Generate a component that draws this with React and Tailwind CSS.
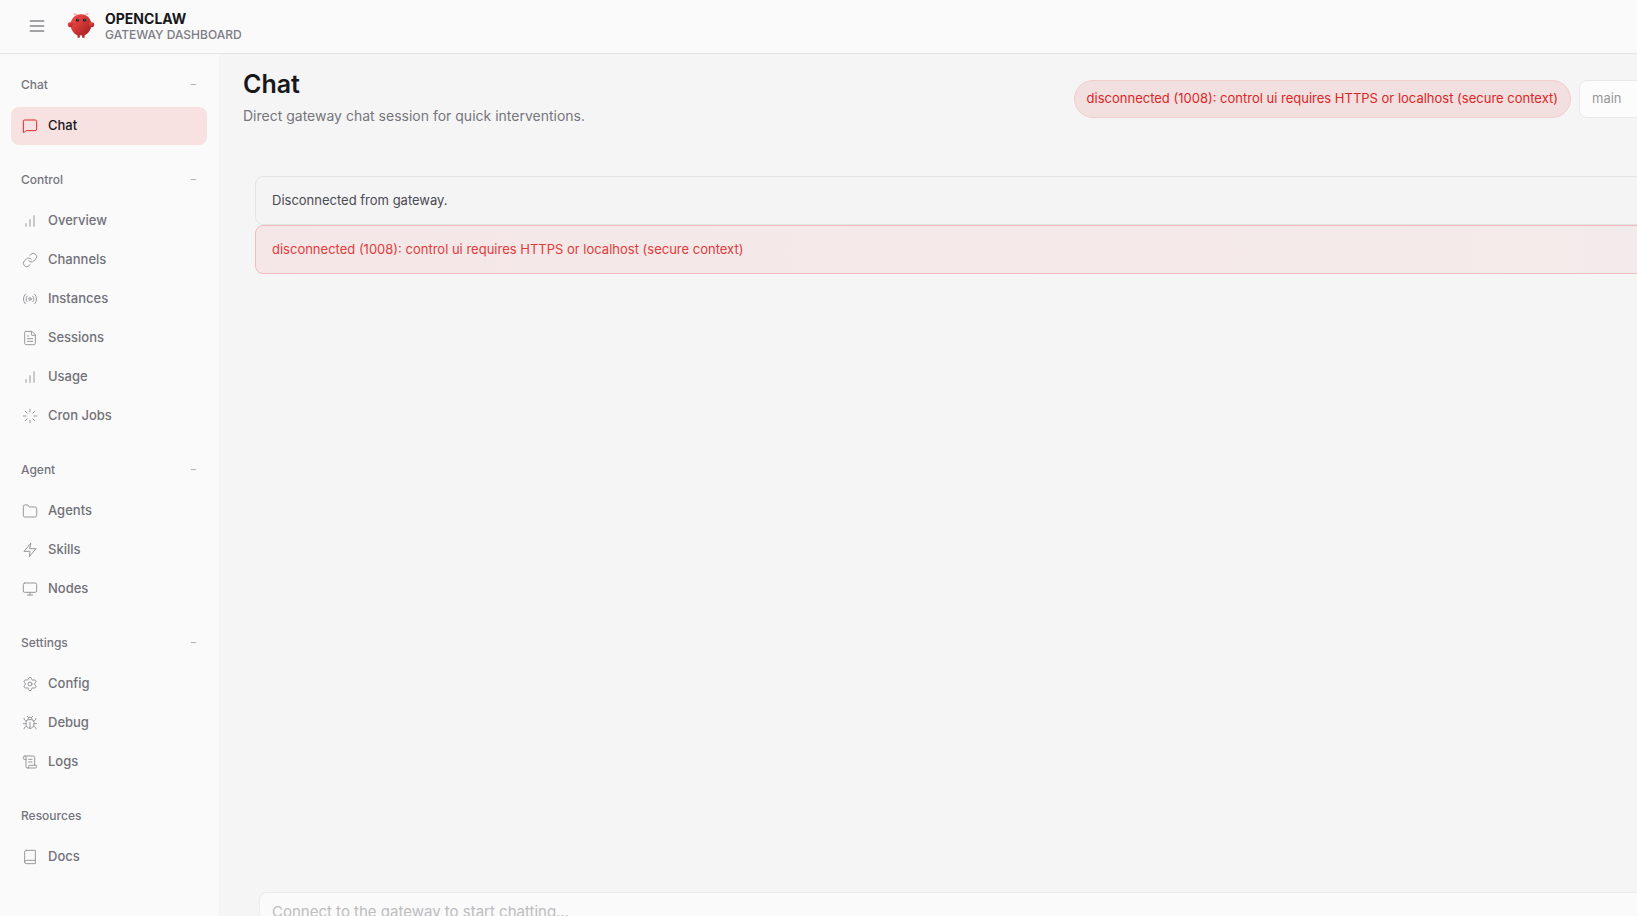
import React, { useState } from "react";
import { FileText, Link, Loader, MessageSquare, Monitor, Radio, ScrollText, Settings } from "lucide-react";

function makeIcon(paths) {
  return function Icon({ className }) {
    return (
      <svg viewBox="0 0 24 24" fill="none" stroke="currentColor" strokeWidth="1.5" strokeLinecap="round" strokeLinejoin="round" className={className} aria-hidden="true">
        {paths.map(d => <path key={d} d={d} />)}
      </svg>
    );
  };
}

const Bars = makeIcon(["M12 20V10", "M18 20V4", "M6 20v-4"]);
const Folder = makeIcon(["M22 19a2 2 0 0 1-2 2H4a2 2 0 0 1-2-2V5a2 2 0 0 1 2-2h5l2 3h9a2 2 0 0 1 2 2z"]);
const Zap = makeIcon(["M13 2 3 14h9l-1 8 10-12h-9z"]);
const Book = makeIcon(["M4 19.5A2.5 2.5 0 0 1 6.5 17H20", "M6.5 2H20v20H6.5A2.5 2.5 0 0 1 4 19.5v-15A2.5 2.5 0 0 1 6.5 2z"]);
const Bug = makeIcon([
  "m8 2 1.88 1.88", "M14.12 3.88 16 2", "M9 7.13v-1a3 3 0 1 1 6 0v1",
  "M12 20c-3.3 0-6-2.7-6-6v-3a4 4 0 0 1 4-4h4a4 4 0 0 1 4 4v3c0 3.3-2.7 6-6 6",
  "M12 20v-9", "M6.53 9C4.6 8.8 3 7.1 3 5", "M6 13H2", "M3 21c0-2.1 1.7-3.9 3.8-4",
  "M20.97 5c0 2.1-1.6 3.8-3.5 4", "M22 13h-4", "M17.2 17c2.1.1 3.8 1.9 3.8 4",
]);

const NAV = [
  { label: "Chat", items: [{ label: "Chat", icon: MessageSquare }] },
  {
    label: "Control",
    items: [
      { label: "Overview", icon: Bars },
      { label: "Channels", icon: Link },
      { label: "Instances", icon: Radio },
      { label: "Sessions", icon: FileText },
      { label: "Usage", icon: Bars },
      { label: "Cron Jobs", icon: Loader },
    ],
  },
  {
    label: "Agent",
    items: [
      { label: "Agents", icon: Folder },
      { label: "Skills", icon: Zap },
      { label: "Nodes", icon: Monitor },
    ],
  },
  {
    label: "Settings",
    items: [
      { label: "Config", icon: Settings },
      { label: "Debug", icon: Bug },
      { label: "Logs", icon: ScrollText },
    ],
  },
  { label: "Resources", fixed: true, items: [{ label: "Docs", icon: Book }] },
];

const ERROR = "disconnected (1008): control ui requires HTTPS or localhost (secure context)";

function Logo() {
  return (
    <svg viewBox="0 0 120 120" className="mb-0.5 h-7 w-7 shrink-0" aria-hidden="true">
      <defs>
        <linearGradient id="claw" x1="0%" y1="0%" x2="100%" y2="100%">
          <stop offset="0%" stopColor="#ff4d4d" />
          <stop offset="100%" stopColor="#991b1b" />
        </linearGradient>
      </defs>
      <path d="M60 10C30 10 15 35 15 55s15 40 30 45v10h10v-10s5 2 10 0v10h10v-10c15-5 30-25 30-45S90 10 60 10Z" fill="url(#claw)" />
      <path d="M20 45C5 40 0 50 5 60s15 5 20-5c3-7 0-10-5-10Z" fill="url(#claw)" />
      <path d="M100 45c15-5 20 5 15 15s-15 5-20-5c-3-7 0-10 5-10Z" fill="url(#claw)" />
      <path d="M45 15Q35 5 30 8M75 15Q85 5 90 8" stroke="#ff4d4d" strokeWidth="3" strokeLinecap="round" fill="none" />
      <circle cx="45" cy="35" r="6" fill="#050810" />
      <circle cx="75" cy="35" r="6" fill="#050810" />
      <circle cx="46" cy="34" r="2.5" fill="#00e5cc" />
      <circle cx="76" cy="34" r="2.5" fill="#00e5cc" />
    </svg>
  );
}

function Topbar({ onToggle }) {
  return (
    <header className="flex h-[54px] shrink-0 items-center border-b border-[#e4e4e7] bg-[#fafafa] pl-[19px]">
      <button type="button" onClick={onToggle} aria-label="Toggle sidebar" className="mb-0.5 flex h-9 w-9 items-center justify-center rounded-lg text-[#a1a1a6]">
        <svg viewBox="0 0 16 14" className="h-3.5 w-4" fill="none" stroke="currentColor" strokeWidth="1.8" strokeLinecap="round" aria-hidden="true">
          <path d="M1.5 2h13M1.5 7h13M1.5 12h13" />
        </svg>
      </button>
      <div className="ml-3 flex items-center gap-2.5">
        <Logo />
        <div>
          <div className="text-[14px] leading-[17px] font-bold text-[#18181b]">OPENCLAW</div>
          <div className="text-[12px] leading-4 font-medium text-[#7c7c84]">GATEWAY DASHBOARD</div>
        </div>
      </div>
    </header>
  );
}

function NavGroup({ group, active, onSelect }) {
  const [open, setOpen] = useState(true);

  return (
    <div className="mb-5">
      {group.fixed ? (
        <div className="flex h-[31px] items-center px-2.5 pb-0.5 text-[12px] font-medium text-[#75757d]">{group.label}</div>
      ) : (
        <button
          type="button"
          onClick={() => setOpen(!open)}
          aria-expanded={open}
          className="flex h-[31px] w-full items-center justify-between px-2.5 pb-0.5 text-[12px] font-medium text-[#75757d]"
        >
          <span>{group.label}</span>
          <span className="text-[11px] text-[#b4b4b8]">{open ? "−" : "+"}</span>
        </button>
      )}
      {open && (
        <div className="mt-1.5 flex flex-col gap-px">
          {group.items.map(item => {
            const key = `${group.label}/${item.label}`;
            const isActive = key === active;
            return (
              <a
                key={key}
                href={`#${item.label.toLowerCase().replace(" ", "-")}`}
                onClick={() => onSelect(key)}
                className={`flex h-[38px] items-center gap-2.5 rounded-lg px-[11px] text-[13px] font-medium ${isActive ? "bg-[#f8e1e1] text-[#18181b]" : "text-[#717179]"}`}
              >
                <item.icon strokeWidth={1.5} className={`h-4 w-4 shrink-0 ${isActive ? "text-[#dc2626]" : "text-[#97979d]"}`} />
                <span>{item.label}</span>
              </a>
            );
          })}
        </div>
      )}
    </div>
  );
}

export default function App() {
  const [showNav, setShowNav] = useState(true);
  const [active, setActive] = useState("Chat/Chat");

  return (
    <div className="flex h-screen flex-col overflow-hidden bg-[#f5f5f5] font-['Inter','Liberation_Sans',sans-serif] text-[#4a4a51]">
      <Topbar onToggle={() => setShowNav(!showNav)} />
      <div className="flex min-h-0 flex-1">
        {showNav && (
          <nav className="w-[219px] shrink-0 overflow-hidden bg-[#fafafa] pt-4 pr-3 pl-[11px]">
            {NAV.map(group => (
              <NavGroup key={group.label} group={group} active={active} onSelect={setActive} />
            ))}
          </nav>
        )}

        <main className="flex min-w-0 flex-1 overflow-hidden pl-6">
          {/* content runs past the right and bottom edges of the window */}
          <div className="-mr-[102px] -mb-10 flex min-w-0 flex-1 flex-col">
            <div className="flex items-start justify-between pt-3.5">
              <div>
                <h1 className="text-[25px] leading-8 font-semibold text-[#18181b]">Chat</h1>
                <p className="mt-1.5 text-[14px] leading-5 text-[#75757d]">Direct gateway chat session for quick interventions.</p>
              </div>
              <div className="mt-3 flex items-center gap-2">
                <div className="flex h-[38px] items-center rounded-full border border-[#f3cccc] bg-[#f2dfdf] px-3 text-[13px] whitespace-nowrap text-[#dc2626]">
                  {ERROR}
                </div>
                <select aria-label="Session" disabled className="h-[38px] w-40 appearance-none rounded-lg border border-[#e9e9eb] bg-[#fcfcfc] px-3 text-[13px] text-[#98989b]">
                  <option>main</option>
                </select>
              </div>
            </div>

            <section className="mt-[50px] flex flex-1 flex-col pl-3">
              <div className="rounded-lg border border-[#e4e4e7] bg-[#f4f4f4] p-4 text-[13px] leading-[15px]">
                Disconnected from gateway.
              </div>
              <div role="alert" className="rounded-lg border border-[#f3bcbc] bg-linear-to-r from-[#f5e7e7] via-[#f5eaea] via-80% to-[#f1ebeb] p-4 text-[13px] leading-[15px] text-[#df3b3b]">
                {ERROR}
              </div>
              <div className="flex-1" />
              <div className="pl-1">
                <textarea
                  disabled
                  aria-label="Message"
                  placeholder="Connect to the gateway to start chatting…"
                  className="block h-16 w-full resize-none rounded-lg border border-[#ebebed] bg-[#fafafa] px-3 py-2 text-[15px] leading-[22px] placeholder:text-[#bdbdc0]"
                />
              </div>
            </section>
          </div>
        </main>
      </div>
    </div>
  );
}
